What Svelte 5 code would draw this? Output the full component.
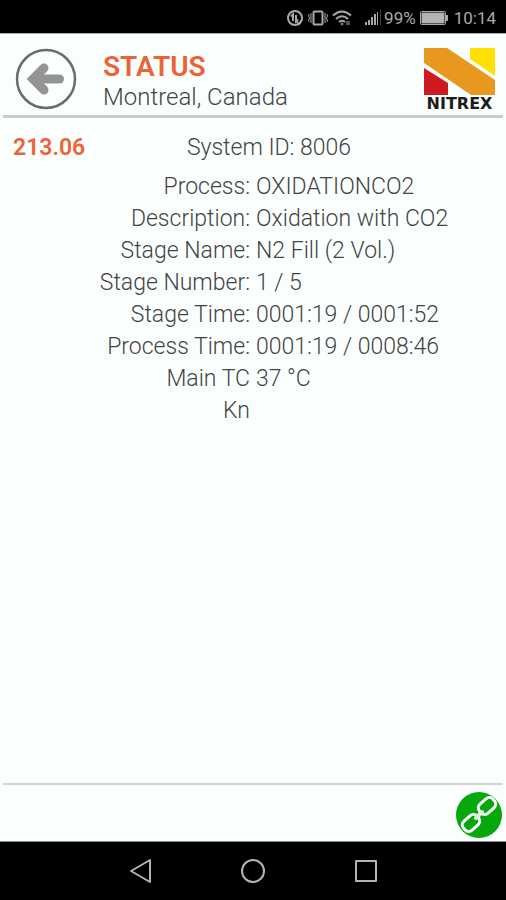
<!-- App.svelte -->

<script>
    const navTitle = 'STATUS';
    const location = 'Montreal, Canada';
    const version = '213.06';
    const systemId = 8006;
    const battery = 99;

    const rows = [
        { label: 'Process:', value: 'OXIDATIONCO2' },
        { label: 'Description:', value: 'Oxidation with CO2' },
        { label: 'Stage Name:', value: 'N2 Fill (2 Vol.)' },
        { label: 'Stage Number:', value: '1 / 5' },
        { label: 'Stage Time:', value: '0001:19 / 0001:52' },
        { label: 'Process Time:', value: '0001:19 / 0008:46' },
        { label: 'Main TC', value: '37 °C' },
        { label: 'Kn', value: '' }
    ];
</script>

<div class="screen">
    <div class="statusbar">
        <svg class="data" width="16" height="16" viewBox="0 0 16 16">
            <circle cx="8" cy="8" r="7" />
            <path d="M6 11V4.500L4 6.500M9 5v6.500l2-2" />
            <path d="M10 12l2 2 3-4" />
        </svg>
        <svg class="vibrate" width="20" height="16" viewBox="0 0 20 16">
            <rect x="5.500" y="1.500" width="9" height="13" rx="1" />
            <path d="M3 3v10M17 3v10M.8 4v3l1 1-1 1v3M19.200 4v3l-1 1 1 1v3" class="thin" />
        </svg>
        <svg class="wifi" width="20" height="16" viewBox="0 0 20 16">
            <path d="M1 5.500q9-8 18 0M4 9q6-5.500 12 0M7 12q3-2.500 6 0" />
            <circle cx="10" cy="14" r="1" class="thin" />
            <path d="M15 11v4M17 11v4" class="thin" />
        </svg>
        <svg class="signal" width="17" height="16" viewBox="0 0 17 16">
            <path d="M1 12h2v3H1zM4 10h2v5H4zM7 7h2v8H7zM10 4h2v11h-2zM13 2h1v13h-1z" />
            <path d="M16 0h1v15h-1z" opacity=".4" />
        </svg>
        <span class="percent">{battery}%</span>
        <svg class="battery" width="28" height="14" viewBox="0 0 28 14">
            <rect x=".5" y=".5" width="25" height="13" rx="1" />
            <rect x="2" y="2" width="22" height="10" class="level" />
            <path d="M27 4v6" />
        </svg>
        <span class="clock">10:14</span>
    </div>

    <header>
        <button class="back" aria-label="Back">
            <svg width="62" height="62" viewBox="0 0 62 62">
                <circle cx="31" cy="31" r="29" fill="none" stroke="#6d6a6d" stroke-width="2.500" />
                <path d="M29 20L18 31l11 11" fill="none" stroke="#949494" stroke-width="9" stroke-linecap="round" />
                <path d="M20 31h24.500" fill="none" stroke="#949494" stroke-width="9" stroke-linecap="round" />
            </svg>
        </button>
        <div class="titles">
            <h1>{navTitle}</h1>
            <p>{location}</p>
        </div>
        <div class="logo">
            <svg width="71" height="47" viewBox="0 0 71 47">
                <path d="M0 0h23l48 32v15H47L0 15z" fill="#e8981f" />
                <path d="M0 20l24 15v12H0z" fill="#cf1b20" />
                <path d="M46 0h25v28L46 11z" fill="#ffe000" />
            </svg>
            <span>NITREX</span>
        </div>
    </header>

    <main>
        <div class="system">
            <strong>{version}</strong>
            <span>System ID: {systemId}</span>
        </div>
        <dl>
            {#each rows as row}
                <dt>{row.label}</dt>
                <dd>{row.value}</dd>
            {/each}
        </dl>
    </main>

    <footer>
        <button class="link" aria-label="Connection">
            <svg width="46" height="46" viewBox="0 0 46 46">
                <circle cx="23" cy="23" r="23" fill="#06a80b" />
                <g fill="none" stroke="#fff" stroke-width="3">
                    <rect x="-9" y="-6" width="18" height="12" rx="5" transform="translate(31 14) rotate(-42)" />
                    <rect x="-9" y="-6" width="18" height="12" rx="5" transform="translate(15 31) rotate(-42)" />
                    <path d="M20 26l6-6" stroke="#dff3df" stroke-width="4" stroke-linecap="round" />
                </g>
            </svg>
        </button>
    </footer>

    <nav>
        <button aria-label="Back">
            <svg width="26" height="26" viewBox="0 0 26 26"><path d="M23 2v22L4 13z" /></svg>
        </button>
        <button aria-label="Home">
            <svg width="26" height="26" viewBox="0 0 26 26"><circle cx="13" cy="13" r="11" /></svg>
        </button>
        <button aria-label="Recent apps">
            <svg width="26" height="26" viewBox="0 0 26 26"><rect x="3" y="3" width="20" height="20" /></svg>
        </button>
    </nav>
</div>

<style>
    :global(body) {
        margin: 0;
    }

    .screen {
        display: flex;
        flex-direction: column;
        min-height: 100vh;
        background: #fafffe;
        color: #444;
        font-family: Roboto, 'Liberation Sans', sans-serif;
        font-size: 23px;
        font-weight: 300;
        line-height: 32px;
    }

    button {
        display: flex;
        padding: 0;
        border: 0;
        background: none;
        cursor: pointer;
    }

    svg {
        display: block;
    }

    .statusbar {
        display: flex;
        align-items: center;
        justify-content: flex-end;
        height: 34px;
        padding: 2px 10px 0 0;
        box-sizing: border-box;
        background: #000;
        color: #a8a8a8;
        font-size: 17px;
        font-weight: 400;
        border-bottom: 1px solid #aaa;
    }

    .data, .vibrate, .wifi, .battery {
        fill: none;
        stroke: #a8a8a8;
        stroke-width: 2;
    }

    .vibrate {
        margin-left: 5px;
    }

    .wifi {
        margin-left: 4px;
    }

    .thin {
        stroke-width: 1;
    }

    .signal {
        margin: 0 3px 0 12px;
        fill: #a8a8a8;
    }

    .battery {
        margin: 0 6px 0 4px;
    }

    .battery rect {
        stroke-width: 1;
    }

    .level {
        fill: #b4b4b4;
    }

    header {
        display: flex;
        align-items: center;
        height: 81px;
        margin: 0 3px;
        padding: 0 8px 0 12px;
        border-bottom: 3px solid #cbcbcd;
    }

    .back {
        margin-top: 8px;
    }

    .titles {
        flex: 1;
        margin-left: 26px;
        padding-top: 14px;
    }

    h1 {
        margin: 0;
        color: #ec6337;
        font-size: 28px;
        font-weight: 600;
        line-height: 30px;
    }

    p {
        margin: 0;
        font-size: 24px;
        line-height: 30px;
    }

    .logo {
        display: flex;
        flex-direction: column;
        align-items: center;
        padding-top: 12px;
        color: #1c1c1c;
        font-family: 'DejaVu Sans', sans-serif;
        font-size: 16px;
        font-weight: bold;
        line-height: 18px;
    }

    main {
        flex: 1;
        padding: 14px 13px;
    }

    .system {
        display: grid;
        grid-template-columns: 1fr 2fr 1fr;
    }

    .system span {
        text-align: center;
        padding-left: 32px;
    }

    strong {
        color: #ec6337;
        font-weight: 600;
    }

    dl {
        display: grid;
        grid-template-columns: 1fr 1fr;
        column-gap: 6px;
        margin: 7px 0 0;
    }

    dt {
        text-align: right;
    }

    dd {
        margin: 0;
    }

    footer {
        display: flex;
        justify-content: flex-end;
        margin: 0 3px;
        padding: 7px 1px 3px;
        border-top: 2px solid #d3d3d5;
    }

    nav {
        display: flex;
        justify-content: center;
        gap: 87px;
        padding: 16px 0;
        background: #000;
        border-top: 1px solid #888;
    }

    nav svg {
        fill: none;
        stroke: #b4b4b4;
        stroke-width: 2;
        stroke-linejoin: round;
    }
</style>
